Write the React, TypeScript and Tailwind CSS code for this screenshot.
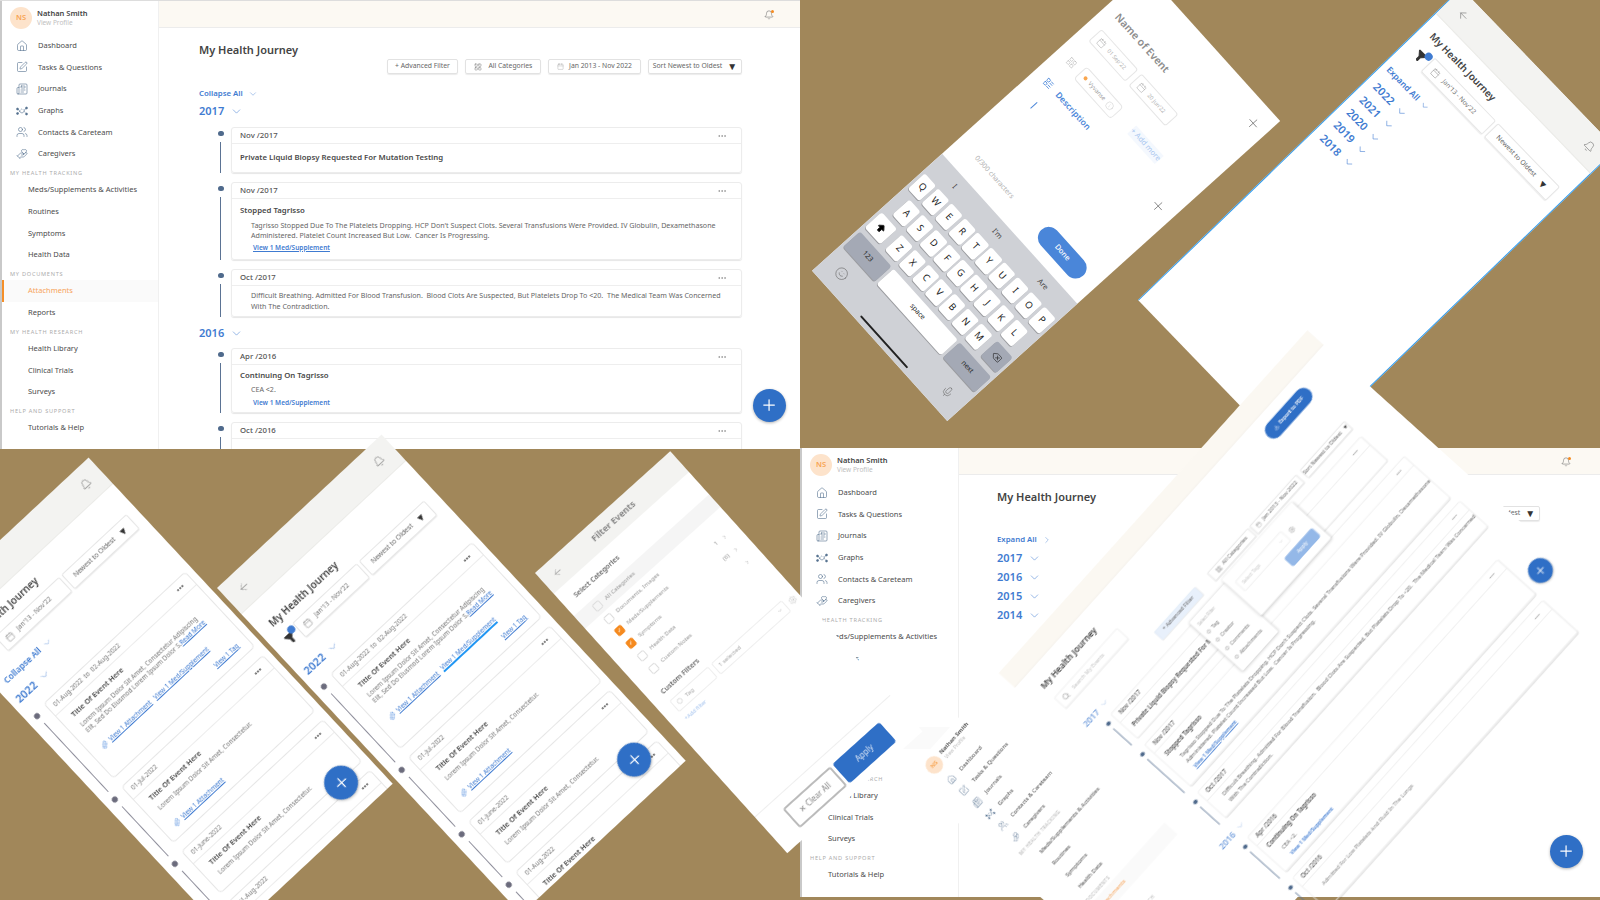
import { ArrowBigUp, ArrowLeft, Bell, Calendar, ChevronDown, ChevronRight, Delete, Download, Ellipsis, Filter, HandHeart, Info, LayoutGrid, LayoutList, Mic, Newspaper, Paperclip, Plus, House, Search, Settings, Smile, SquarePen, Users } from "lucide-react";
import type { ReactNode } from "react";

const BLUE = "text-[#3f7bd1]";

// node chart used for the Graphs menu entry, no package has this one
const GraphIcon = ({ size, strokeWidth, className }: { size: number; strokeWidth: number; className: string }) => (
  <svg width={size} height={size} viewBox="0 0 24 24" fill="none" stroke="currentColor" strokeWidth={strokeWidth} className={className}>
    <path d="M3 8c4 0 4 8 9 8s4-9 9-10" />
    <path d="M3 17c4 0 5-9 9-9s5 8 9 9" strokeDasharray="3 2" />
    <circle cx="3" cy="8" r="2" fill="currentColor" />
    <circle cx="21" cy="6" r="2" fill="currentColor" />
    <circle cx="3" cy="17" r="2" fill="currentColor" />
    <circle cx="21" cy="18" r="2" fill="currentColor" />
  </svg>
);

const mainMenu = [
  { label: "Dashboard", Icon: House },
  { label: "Tasks & Questions", Icon: SquarePen },
  { label: "Journals", Icon: Newspaper },
  { label: "Graphs", Icon: GraphIcon },
  { label: "Contacts & Careteam", Icon: Users },
  { label: "Caregivers", Icon: HandHeart },
];

const menuGroups = [
  { title: "MY HEALTH TRACKING", items: ["Meds/Supplements & Activities", "Routines", "Symptoms", "Health Data"] },
  { title: "MY DOCUMENTS", items: ["Attachments", "Reports"] },
  { title: "MY HEALTH RESEARCH", items: ["Health Library", "Clinical Trials", "Surveys"] },
  { title: "HELP AND SUPPORT", items: ["Tutorials & Help"] },
];

const Sidebar = ({ bar = true }: { bar?: boolean }) => (
  <aside className={`w-[158px] shrink-0 text-[7.5px] text-[#4b4b4b] ${bar ? "border-l-2 border-[#c9c9c9]" : ""}`}>
    <div className="flex h-[34px] items-center gap-[5px] pl-[8px]">
      <div className="flex h-[22px] w-[22px] items-center justify-center rounded-full bg-[#fde3cb] text-[7.5px] font-semibold text-[#f7a24e]">NS</div>
      <div className="leading-[9.5px]">
        <div className="font-semibold text-[#444]">Nathan Smith</div>
        <div className="text-[6.5px] text-[#c0c0c0]">View Profile</div>
      </div>
    </div>
    {mainMenu.map(({ label, Icon }) => (
      <div key={label} className="flex h-[21.6px] items-center">
        <div className="flex w-[36px] justify-center pl-[4px]">
          <Icon size={12} strokeWidth={1.2} className="text-[#54708f]" />
        </div>
        <span>{label}</span>
      </div>
    ))}
    {menuGroups.map((group) => (
      <div key={group.title}>
        <div className="flex h-[14.6px] items-end pb-[1.5px] pl-[8px] text-[5.6px] tracking-[0.75px] text-[#ababab]">{group.title}</div>
        {group.items.map((item) =>
          item === "Attachments" ? (
            <div key={item} className="flex h-[21.6px] items-center border-l-2 border-[#f58f29] bg-[#fafafa] pl-[24px] text-[#f7a45a]">{item}</div>
          ) : (
            <div key={item} className="flex h-[21.6px] items-center pl-[26px]">{item}</div>
          )
        )}
      </div>
    ))}
  </aside>
);

const TopBar = ({ pad }: { pad: string }) => (
  <div className={`flex h-[27px] shrink-0 items-center justify-end border-b border-[#ececec] bg-[#fcf9f3] pt-[1px] ${pad}`}>
    <div className="relative">
      <Bell size={10} strokeWidth={1.3} className="text-[#666]" />
      <span className="absolute right-0 top-0 h-[3px] w-[3px] rounded-full bg-[#f58a1f]" />
    </div>
  </div>
);

const Pill = ({ children, className = "" }: { children: ReactNode; className?: string }) => (
  <div className={`flex h-[15px] items-center justify-center gap-[5px] whitespace-nowrap rounded-[2px] border border-[#e2e2e2] text-[6.8px] text-[#666] shadow-[0_1px_1px_rgba(0,0,0,0.08)] ${className}`}>
    {children}
  </div>
);

const Toolbar = () => (
  <div className="flex justify-end gap-[7px]">
    <Pill className="w-[71px]">+ Advanced Filter</Pill>
    <Pill className="w-[76px]"><LayoutGrid size={8} strokeWidth={1.3} />&nbsp;All Categories</Pill>
    <Pill className="w-[93px]"><Calendar size={7} strokeWidth={1.2} className="text-[#999]" />Jan 2013 - Nov 2022</Pill>
    <Pill className="w-[94px] gap-[2px]">Sort Newest to Oldest<span className="pb-[2px] text-[10px] leading-[10px] text-[#333]">▼</span></Pill>
  </div>
);

const Fab = ({ className }: { className: string }) => (
  <div className={`absolute flex items-center justify-center rounded-full bg-[#2f6fc6] text-white shadow-[0_1px_3px_rgba(0,0,0,0.3)] ${className}`}>
    <Plus size="55%" strokeWidth={1.6} />
  </div>
);

const YearRow = ({ year, className = "text-[#3f7bd1]" }: { year: string; className?: string }) => (
  <div className={`flex h-[16px] items-center gap-[6px] text-[11px] font-semibold ${className}`}>
    {year}
    <ChevronDown size={13} strokeWidth={1} />
  </div>
);

type JourneyItem = { date: string; body: ReactNode; height: string };

const journey2017: JourneyItem[] = [
  {
    date: "Nov /2017",
    height: "h-[46px]",
    body: <div className="pl-[8px] pt-[8px] text-[7.8px] font-semibold text-[#4a4a4a]">Private Liquid Biopsy Requested For Mutation Testing</div>,
  },
  {
    date: "Nov /2017",
    height: "h-[78px]",
    body: (
      <div className="pl-[8px] pt-[6px]">
        <div className="text-[7.8px] font-semibold text-[#4a4a4a]">Stopped Tagrisso</div>
        <div className="mt-[3px] whitespace-nowrap pl-[11px] text-[7.1px] leading-[10.5px] text-[#666]">
          <div>Tagrisso Stopped Due To The Platelets Dropping. HCP Don't Suspect Clots. Several Transfusions Were Provided. IV Globulin, Dexamethasone</div>
          <div>Administered. Platelet Count Increased But Low.&nbsp; Cancer Is Progressing.</div>
          <div className={`mt-[2px] pl-[2px] text-[6.5px] font-semibold underline ${BLUE}`}>View 1 Med/Supplement</div>
        </div>
      </div>
    ),
  },
  {
    date: "Oct /2017",
    height: "h-[48px]",
    body: (
      <div className="whitespace-nowrap pl-[19px] pt-[4px] text-[7.1px] leading-[10.5px] text-[#666]">
        <div>Difficult Breathing. Admitted For Blood Transfusion.&nbsp; Blood Clots Are Suspected, But Platelets Drop To &lt;20.&nbsp; The Medical Team Was Concerned</div>
        <div>With The Contradiction.</div>
      </div>
    ),
  },
];

const journey2016: JourneyItem[] = [
  {
    date: "Apr /2016",
    height: "h-[65px]",
    body: (
      <div className="pl-[8px] pt-[5px]">
        <div className="text-[7.8px] font-semibold text-[#4a4a4a]">Continuing On Tagrisso</div>
        <div className="mt-[2px] pl-[11px] text-[7.1px] leading-[10.5px] text-[#666]">CEA &lt;2.</div>
        <div className={`mt-[4px] pl-[13px] text-[6.5px] font-semibold ${BLUE}`}>View 1 Med/Supplement</div>
      </div>
    ),
  },
  {
    date: "Oct /2016",
    height: "h-[60px]",
    body: <div className="pl-[19px] pt-[11px] text-[7.1px] leading-[10.5px] text-[#888]">Admitted For Low Platelets And Fluid In The Lungs</div>,
  },
];

const Timeline = ({ items, gap }: { items: JourneyItem[]; gap: string }) => (
  <div>
    {items.map((item, i) => (
      <div key={i} className={`flex ${gap}`}>
        <div className="flex w-[32px] shrink-0 flex-col items-center pl-[11px]">
          <div className="mt-[4px] h-[5px] w-[6px] rounded-full bg-[#4f6a8c]" />
          <div className="mt-[6px] w-px flex-1 bg-[#5b7394]" />
        </div>
        <div className={`flex-1 rounded-[3px] border border-[#ececec] shadow-[0_1px_1px_rgba(0,0,0,0.1)] ${item.height}`}>
          <div className="flex h-[16px] items-center justify-between border-b border-[#eeeeee] pl-[8px] pr-[14px] pt-[1px] text-[7.8px] font-medium text-[#555]">
            {item.date}
            <Ellipsis size={10} strokeWidth={1.4} className="text-[#777]" />
          </div>
          {item.body}
        </div>
      </div>
    ))}
  </div>
);

const Desktop = ({ className, barPad, children }: { className: string; barPad: string; children: ReactNode }) => (
  <section className={`absolute flex overflow-hidden bg-white ${className}`}>
    <Sidebar />
    <div className="flex min-w-0 flex-1 flex-col border-l border-[#f0f0f0]">
      <TopBar pad={barPad} />
      {children}
    </div>
  </section>
);

const Title = ({ className = "" }: { className?: string }) => (
  <h1 className={`h-[14px] text-[11px] font-semibold leading-[14px] text-[#444] ${className}`}>My Health Journey</h1>
);

const JourneyDesktop = () => (
  <Desktop className="left-0 top-0 h-[449px] w-[800px] border-t border-[#ddd]" barPad="pr-[26px]">
    <div className="pl-[40px] pr-[58px]">
      <Title className="mt-[15px]" />
      <div className="mt-[2px]"><Toolbar /></div>
      <div className={`mt-[14px] flex h-[12px] items-center gap-[5px] text-[7.8px] font-semibold ${BLUE}`}>
        Collapse All <ChevronDown size={10} strokeWidth={1} />
      </div>
      <YearRow year="2017" className="mt-[3px] text-[#3f7bd1]" />
      <div className="mt-[8px]"><Timeline items={journey2017} gap="pb-[9px]" /></div>
      <YearRow year="2016" className="mb-[7px] mt-[-1px] text-[#3f7bd1]" />
      <Timeline items={journey2016} gap="pb-[9px]" />
    </div>
    <Fab className="left-[753px] top-[388px] h-[33px] w-[33px]" />
  </Desktop>
);

const CollapsedDesktop = () => (
  <Desktop className="left-[800px] top-[448px] h-[449px] w-[800px]" barPad="pr-[29px]">
    <div className="pl-[38px] pr-[60px]">
      <Title className="mt-[15px]" />
      <div className="mt-[2px]"><Toolbar /></div>
      <div className={`mt-[13px] flex h-[12px] items-center gap-[5px] text-[7.8px] font-semibold ${BLUE}`}>
        Expand All <ChevronRight size={10} strokeWidth={1} />
      </div>
      <YearRow year="2017" className="mt-[4px] text-[#3f7bd1]" />
      <YearRow year="2016" className="mt-[3px] text-[#3f7bd1]" />
      <YearRow year="2015" className="mt-[3px] text-[#3f7bd1]" />
      <YearRow year="2014" className="mt-[3px] text-[#3f7bd1]" />
    </div>
    <Fab className="left-[750px] top-[387px] h-[33px] w-[33px]" />
  </Desktop>
);

const RotatedDesktop = () => (
  <section className="absolute left-[906px] top-[776px] flex h-[465px] w-[750px] origin-top-left rotate-[-48deg] scale-[0.8] bg-white blur-[0.5px]">
    <div className="pl-[15px]"><Sidebar bar={false} /></div>
    <div className="flex min-w-0 flex-1 flex-col">
      <div className="h-[27px] shrink-0 border-b border-[#f3f0ea] bg-[#fbf8f2]" />
      <div className="shrink-0 pl-[23px] pr-[54px]">
        <div className="mt-[14px] flex items-center justify-between">
          <Title />
          <div className="flex h-[22px] w-[78px] items-center justify-center gap-[3px] rounded-full bg-[#2f6fc6] text-[6.5px] font-semibold text-white"><Download size={7} />Export to PDF</div>
        </div>
        <div className="flex justify-between">
          <div className="w-[118px]">
            <div className="mt-[9px] flex h-[20px] items-center gap-[8px] rounded-[2px] border border-[#eee] pl-[6px] text-[7px] text-[#c4c4c4] shadow-[0_1px_1px_rgba(0,0,0,0.05)]">
              <Search size={10} className="text-[#999]" />Search My Events
            </div>
            <YearRow year="2017" className="mt-[23px] text-[#7aa3de]" />
          </div>
          <div className="mt-[47px] flex gap-[3px]">
            <Pill className="mr-[20px] w-[76px] border-[#e3edfa] bg-[#e8f0fb] text-[#4a7bc2]">+ Advanced Filter</Pill>
            <Pill className="w-[76px]"><LayoutGrid size={8} strokeWidth={1.3} />All Categories</Pill>
            <Pill className="mr-[4px] w-[87px]"><Calendar size={7} strokeWidth={1.2} />Jan 2013 - Nov 2022</Pill>
            <Pill className="w-[83px] gap-[2px]">Sort Newest to Oldest<span className="text-[7px] text-[#333]">▼</span></Pill>
          </div>
        </div>
        <div className="mt-[7px]"><Timeline items={journey2017} gap="pb-[11px]" /></div>
        <YearRow year="2016" className="mb-[8px] mt-[1px] text-[#7aa3de]" />
        <Timeline items={journey2016} gap="pb-[11px]" />
      </div>
    </div>
    <div className="absolute left-[379px] top-[135px] h-[90px] w-[67px] rounded-[2px] bg-white p-[6px] text-[6.5px] text-[#777] shadow-[0_1px_4px_rgba(0,0,0,0.2)]">
      <div className="text-[5.5px] text-[#bbb]">Select Filter</div>
      {["Tag", "Creator", "Comments", "Attachments"].map((label) => (
        <div key={label} className="mt-[6px] flex items-center gap-[4px]">
          <span className="h-[5px] w-[5px] rounded-full border border-[#aaa]" />{label}
        </div>
      ))}
    </div>
    <div className="absolute left-[446px] top-[129px] h-[67px] w-[131px] rounded-[2px] bg-white shadow-[0_1px_4px_rgba(0,0,0,0.2)]">
      <div className="ml-[9px] mt-[14px] flex w-[101px] items-center gap-[6px]">
        <div className="flex h-[18px] flex-1 items-center justify-between rounded-[2px] border border-[#eee] px-[5px] text-[6px] text-[#ccc]">Select Tags<ChevronDown size={7} /></div>
        <Settings size={9} className="shrink-0 text-[#aaa]" />
      </div>
      <div className="ml-[72px] mt-[8px] flex h-[16px] w-[52px] items-center justify-center rounded-[3px] bg-[#94b8e8] text-[6.5px] text-white">Apply</div>
    </div>
    <Fab className="left-[706px] top-[402px] h-[31px] w-[31px]" />
  </section>
);

const PhoneHeader = ({ back }: { back: boolean }) => (
  <div className="flex h-[36px] shrink-0 items-center justify-between border-b border-[#ebebe8] bg-[#f3f3f1] px-[14px] text-[#888]">
    {back ? <ArrowLeft size={13} strokeWidth={1.3} /> : <span />}
    <Bell size={12} strokeWidth={1.2} className="text-[#777]" />
  </div>
);

const FilterIcon = () => (
  <div className="relative h-[12px] w-[14px] shrink-0">
    <Filter size={12} className="fill-[#333] text-[#333]" />
    <span className="absolute right-[-2px] top-[-4px] h-[8px] w-[8px] rounded-full bg-[#3f7bd1]" />
  </div>
);

const PhonePills = () => (
  <>
    <div className="flex h-[20px] w-[88px] shrink-0 items-center gap-[6px] rounded-[2px] border border-[#e6e6e6] pl-[6px] text-[6.6px] text-[#777] shadow-[0_1px_1px_rgba(0,0,0,0.08)]">
      <Calendar size={9} strokeWidth={1.2} />Jan'13 - Nov'22
    </div>
    <div className="flex h-[20px] w-[89px] shrink-0 items-center justify-between rounded-[2px] border border-[#e6e6e6] px-[8px] text-[6.8px] text-[#666] shadow-[0_1px_1px_rgba(0,0,0,0.08)]">
      Newest to Oldest<span className="text-[10px] leading-[10px] text-[#333]">▼</span>
    </div>
  </>
);

const Attachment = () => (
  <span className="inline-flex items-center gap-[3px]">
    <Paperclip size={8} className="text-[#5a93e0]" />
    <span className="underline">View 1 Attachment</span>
  </span>
);

const PhoneTimeline = ({ highlight }: { highlight: boolean }) => {
  const events = [
    {
      date: "01-Aug-2022  to  02-Aug-2022",
      height: "h-[103px]",
      text: (
        <>
          <div>Lorem Ipsum Dolor Sit Amet, Consectetur Adipiscing</div>
          <div>Elit, Sed Do Eiusmod Lorem Ipsum Dolor S.<span className="text-[#3f7bd1] underline">Read More</span></div>
        </>
      ),
      links: (
        <>
          <div className="mt-[14px] flex gap-[5px] text-[#3f7bd1]">
            <Attachment />
            <span className={highlight ? "border-b-2 border-[#2196f3] leading-[7px]" : "underline"}>View 1 Med/Supplement</span>
          </div>
          <div className="mt-[10px] pl-[138px] text-[#3f7bd1] underline">View 1 Tag</div>
        </>
      ),
    },
    {
      date: "01-Jul-2022",
      height: "h-[77px]",
      text: <div>Lorem Ipsum Dolor Sit Amet, Consectetur.</div>,
      links: <div className="mt-[14px] text-[#3f7bd1]"><Attachment /></div>,
    },
    { date: "01-June-2022", height: "h-[58px]", text: <div>Lorem Ipsum Dolor Sit Amet, Consectetur.</div>, links: null },
    { date: "01-Aug-2022", height: "h-[58px]", text: null, links: null },
  ];
  return (
    <div>
      {events.map((event) => (
        <div key={event.date} className="flex pb-[11px]">
          <div className="flex w-[24px] shrink-0 flex-col items-center pr-[2px]">
            <div className="mt-[2px] h-[6px] w-[6px] rounded-full bg-[#6b6b7c]" />
            <div className="mb-[-6px] mt-[7px] w-px flex-1 bg-[#8f8f9c]" />
          </div>
          <div className={`w-[194px] rounded-[4px] border border-[#e6e6e6] ${event.height}`}>
            <div className="flex h-[17px] items-center justify-between border-b border-[#ececec] pl-[6px] pr-[9px] text-[6.4px] text-[#777]">
              <span className="whitespace-pre">{event.date}</span>
              <Ellipsis size={10} strokeWidth={2.4} className="text-[#444]" />
            </div>
            <div className="whitespace-nowrap pl-[12px] text-[6.4px] leading-[8px] text-[#777]">
              <div className="py-[5px] text-[7.5px] font-semibold leading-[10px] text-[#4a4a4a]">Title Of Event Here</div>
              {event.text}
              {event.links}
            </div>
          </div>
        </div>
      ))}
    </div>
  );
};

const EventsPhone = ({ className, filtered }: { className: string; filtered: boolean }) => (
  <section className={`absolute flex h-[446px] w-[225px] origin-top-left rotate-[-43deg] flex-col overflow-hidden bg-white blur-[0.3px] ${className}`}>
    <PhoneHeader back={filtered} />
    <div className={`shrink-0 pl-[14px] text-[10px] font-semibold leading-[14px] text-[#444] ${filtered ? "mt-[20px]" : "mt-[10px]"}`}>My Health Journey</div>
    {filtered ? (
      <div className="mt-[7px] flex shrink-0 items-center gap-[3px] pl-[14px]">
        <FilterIcon />
        <PhonePills />
      </div>
    ) : (
      <div className="mt-[7px] flex shrink-0 items-center justify-end gap-[3px] pr-[11px]"><PhonePills /></div>
    )}
    {!filtered && (
      <div className="mt-[14px] flex h-[12px] shrink-0 items-center gap-[4px] pl-[11px] text-[8.5px] font-semibold text-[#3f7bd1]">
        Collapse All <ChevronDown size={11} strokeWidth={1} />
      </div>
    )}
    <YearRow year="2022" className={`shrink-0 pl-[7px] text-[#3f7bd1] ${filtered ? "mt-[17px]" : "mt-[8px]"}`} />
    <div className={`shrink-0 ${filtered ? "mt-[10px]" : "mt-[12px]"}`}><PhoneTimeline highlight={filtered} /></div>
    <Fab className="left-[171px] top-[393px] h-[34px] w-[34px]" />
  </section>
);

const CollapsedPhone = () => (
  <section className="absolute left-[1461px] top-[-12px] flex h-[449px] w-[224px] origin-top-left rotate-[46deg] flex-col border-x border-[#2e9bef] bg-white">
    <PhoneHeader back />
    <div className="mt-[10px] pl-[12px] text-[10px] font-semibold leading-[14px] text-[#444]">My Health Journey</div>
    <div className="mt-[7px] flex items-center gap-[3px] pl-[14px]">
      <FilterIcon />
      <PhonePills />
    </div>
    <div className="mt-[15px] flex h-[12px] items-center gap-[4px] pl-[6px] text-[8.5px] font-semibold text-[#3f7bd1]">
      Expand All <ChevronDown size={11} strokeWidth={1} />
    </div>
    <div className="mt-[5px]">
      {["2022", "2021", "2020", "2019", "2018"].map((year) => (
        <YearRow key={year} year={year} className="mt-[2.4px] pl-[9px] text-[#3f7bd1]" />
      ))}
    </div>
  </section>
);

const keyRows = ["QWERTYUIOP", "ASDFGHJKL"];
const Key = ({ label, className = "w-[17.5px] bg-white text-[9.5px]" }: { label: ReactNode; className?: string }) => (
  <div className={`flex h-[23px] items-center justify-center rounded-[3px] text-[#222] shadow-[0_1px_0_rgba(0,0,0,0.25)] ${className}`}>{label}</div>
);

const KeyboardPhone = () => (
  <section className="absolute left-[1145px] top-[-29px] flex h-[448px] w-[202px] origin-top-left rotate-[48deg] flex-col bg-white">
    <div className="flex-1 px-[14px]">
      <div className="mt-[43px] text-[10.5px] font-semibold leading-[14px] text-[#8d8d8d]">Name of Event</div>
      <div className="relative mt-[14px] flex gap-[5px]">
        {["01 Sep'22", "20 Jun'22"].map((d) => (
          <div key={d} className="flex h-[18px] w-[55px] items-center gap-[5px] rounded-[3px] border border-[#e6e6e6] pl-[5px] text-[5.6px] text-[#b5b5b5]">
            <Calendar size={9} strokeWidth={1.2} className="text-[#999]" />{d}
          </div>
        ))}
        <Plus size={17} strokeWidth={1} className="absolute right-[-6px] top-[-58px] text-[#666]" />
      </div>
      <div className="mt-[18px] flex items-center">
        <LayoutGrid size={10} strokeWidth={1.2} className="text-[#aaa]" />
        <div className="ml-[8px] flex h-[18px] w-[55px] items-center justify-between rounded-[4px] border border-[#e6e6e6] px-[5px] text-[6px] text-[#999]">
          <span className="h-[4px] w-[4px] rounded-full bg-[#f9a64f]" />Vyvanse<Info size={9} strokeWidth={1} className="text-[#bbb]" />
        </div>
        <span className="ml-[22px] bg-[#f4f8fe] text-[7.5px] text-[#a9c6ef]">+ Add more</span>
      </div>
      <div className="relative mt-[16px] flex items-center gap-[8px] text-[8.5px] font-semibold text-[#4a86d9]">
        <LayoutList size={10} />Description
        <Plus size={17} strokeWidth={1} className="absolute right-[-4px] top-[-2px] text-[#666]" />
      </div>
      <div className="ml-[11px] mt-[14px] h-[9px] w-px bg-[#4a86d9]" />
      <div className="mt-[62px] flex items-center justify-between pl-[11px] pr-[3px]">
        <span className="text-[7px] text-[#b0b0b0]">0/300 characters</span>
        <div className="flex h-[22px] w-[62px] items-center justify-center rounded-full bg-[#4a86d9] text-[7.5px] font-medium text-white">Done</div>
      </div>
    </div>
    <div className="flex h-[175px] shrink-0 flex-col bg-[#cfd1d6] px-[3px]">
      <div className="flex h-[26px] items-center justify-around text-[7.5px] text-[#444]">
        <span>I</span><span>I'm</span><span>Are</span>
      </div>
      <div className="flex flex-col gap-[6px]">
        {keyRows.map((row) => (
          <div key={row} className="flex justify-center gap-[2.6px]">
            {row.split("").map((k) => <Key key={k} label={k} />)}
          </div>
        ))}
        <div className="flex justify-center gap-[2.6px]">
          <Key label={<ArrowBigUp size={11} className="fill-black" />} className="mr-[5px] w-[23px] bg-white" />
          {"ZXCVBNM".split("").map((k) => <Key key={k} label={k} />)}
          <Key label={<Delete size={11} strokeWidth={1.3} />} className="ml-[5px] w-[23px] bg-[#a4a9b5]" />
        </div>
        <div className="flex justify-between gap-[3px]">
          <Key label="123" className="w-[47px] bg-[#a4a9b5] text-[7px]" />
          <Key label="space" className="flex-1 bg-white text-[7px]" />
          <Key label="next" className="w-[47px] bg-[#a4a9b5] text-[7px]" />
        </div>
      </div>
      <div className="mt-[12px] flex items-center justify-between px-[12px] text-[#666]">
        <Smile size={14} strokeWidth={1} />
        <Mic size={13} strokeWidth={1} />
      </div>
      <div className="mx-auto mt-[6px] h-[2px] w-[70px] rounded-full bg-[#222]" />
    </div>
  </section>
);

const categories = [
  { label: "All Categories", checked: false, count: "", arrow: false, active: true },
  { label: "Documents, Images", checked: false, count: "", arrow: false },
  { label: "Meds/Supplements", checked: true, count: "1", arrow: true },
  { label: "Symptoms", checked: true, count: "(6)", arrow: true },
  { label: "Health Data", checked: false, count: "", arrow: true },
  { label: "Custom Notes", checked: false, count: "", arrow: false },
];

const FilterPhone = () => (
  <section className="absolute left-[535px] top-[573px] flex h-[377px] w-[182px] origin-top-left rotate-[-42deg] flex-col bg-white blur-[0.3px]">
    <div className="flex h-[28px] shrink-0 items-center bg-[#f3f3f1] pl-[12px]">
      <ArrowLeft size={11} strokeWidth={1.3} className="text-[#888]" />
      <div className="ml-[42px] text-[9px] font-bold text-[#888]">Filter Events</div>
    </div>
    <div className="mt-[11px] pl-[14px] text-[7px] font-semibold leading-[10px] text-[#666]">Select Categories</div>
    <div className="mt-[9px]">
      {categories.map((c) => (
        <div key={c.label} className={`flex h-[16.8px] items-center gap-[6px] pl-[20px] pr-[14px] text-[6px] text-[#999] ${c.active ? "bg-[#f5f5f5]" : ""}`}>
          {c.checked ? (
            <span className="flex h-[9px] w-[9px] items-center justify-center rounded-[2px] bg-[#f58a1f] text-[6px] text-white">✓</span>
          ) : (
            <span className="h-[9px] w-[9px] rounded-[2px] border border-[#ddd]" />
          )}
          <span className="flex-1">{c.label}</span>
          <span>{c.count}</span>
          {c.arrow && <ChevronRight size={6} />}
        </div>
      ))}
    </div>
    <div className="mt-[10px] pl-[14px] text-[7px] font-semibold leading-[10px] text-[#666]">Custom Filters</div>
    <div className="mt-[6px] flex items-center gap-[4px] pl-[14px] text-[6px] text-[#aaa]">
      <div className="flex h-[15px] w-[52px] items-center gap-[5px] rounded-[2px] border border-[#eee] pl-[4px]">
        <span className="h-[6px] w-[6px] rounded-full border border-[#ddd]" />Tag
      </div>
      <div className="flex h-[15px] w-[95px] items-center justify-between rounded-[2px] border border-[#eee] px-[4px]">1 selected<ChevronDown size={6} /></div>
      <Settings size={9} strokeWidth={1} />
    </div>
    <div className="mt-[5px] pl-[14px] text-[5.6px] text-[#a9c6ef]">+Add filter</div>
    <div className="mt-auto flex h-[49px] gap-[3px] border-t border-[#eee] px-[26px] pt-[12px]">
      <div className="flex h-[26px] w-[66px] items-center justify-center rounded-[3px] border-2 border-[#bbb] text-[8px] text-[#888]">✕ Clear All</div>
      <div className="flex h-[26px] w-[66px] items-center justify-center rounded-[3px] bg-[#2f6fc6] text-[8px] text-white/80">Apply</div>
    </div>
  </section>
);

export default function App() {
  return (
    <div className="relative h-[900px] w-[1600px] overflow-hidden bg-[#a1875a] font-['Noto_Sans',sans-serif] blur-[0.4px]">
      <KeyboardPhone />
      <CollapsedPhone />
      <JourneyDesktop />
      <CollapsedDesktop />
      <RotatedDesktop />
      <EventsPhone className="left-[-76px] top-[611px]" filtered={false} />
      <EventsPhone className="left-[217px] top-[588px]" filtered />
      <FilterPhone />
    </div>
  );
}
